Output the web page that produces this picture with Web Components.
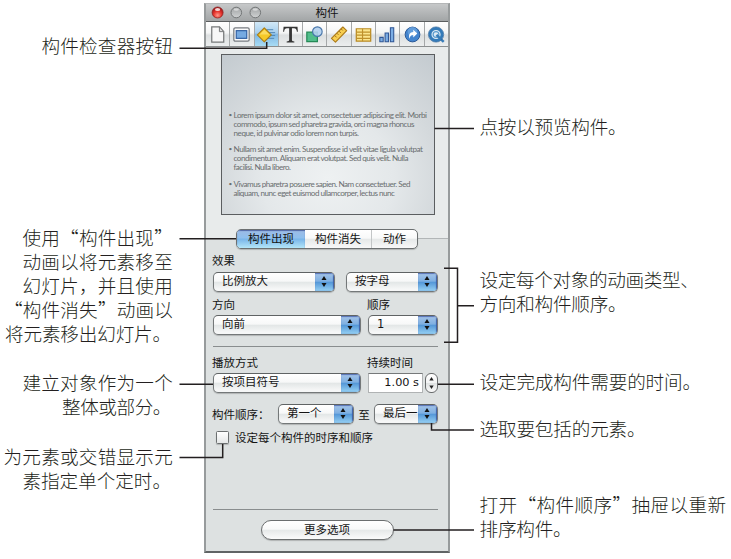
<!DOCTYPE html>
<html lang="zh-CN">
<head>
<meta charset="utf-8">
<title>构件</title>
<style>
html,body{margin:0;padding:0;background:#fff}
body{width:731px;height:559px;overflow:hidden;font-family:"Liberation Sans","Noto Sans CJK SC",sans-serif;color:#111}
</style>
</head>
<body>
<inspector-guide></inspector-guide>
<script>
function define(name, html, setup){
  const t=document.createElement('template');
  t.innerHTML=html;
  customElements.define(name, class extends HTMLElement{
    connectedCallback(){
      if(this.shadowRoot) return;
      this.attachShadow({mode:'open'}).appendChild(t.content.cloneNode(true));
      if(setup) setup(this,this.shadowRoot);
    }
  });
}

/* One unbroken line of text, tracked to the width in its w attribute. */
define('text-line',`<style>
:host{display:block;white-space:nowrap}
span{display:inline-block}
</style><span><slot></slot></span>`,(el,r)=>{
  const w=parseFloat(el.getAttribute('w'));
  const s=r.querySelector('span');
  const n=[...el.textContent].length;
  if(w&&n>1){
    const now=s.getBoundingClientRect().width;
    const ls=(w-now)/n;
    s.style.letterSpacing=ls.toFixed(3)+'px';
  }
});

define('call-out',`<style>
:host{display:block;font:300 18.6px/24px "Noto Sans CJK SC",sans-serif;color:#231f20;height:24px}
</style><slot></slot>`,(el)=>{el.style.marginTop=(el.getAttribute('gap')||0)+'px'});

define('pop-up',`<style>
:host{display:flex;box-sizing:border-box;height:20px;border:1.5px solid #747879;border-top-color:#5f6364;border-radius:5px;background:linear-gradient(#fff,#f7f8f8 45%,#e3e7e7 52%,#f6f7f7 90%);overflow:hidden;box-shadow:0 1px 1px #0003;font:11.5px/17px "DejaVu Sans","Noto Sans CJK SC",sans-serif}
.t{flex:1;padding-left:8px;overflow:hidden;white-space:nowrap}
.a{flex:none;width:19px;background:linear-gradient(#a5c4e8,#7fb0e2 45%,#5598d8 52%,#95d0f3);box-shadow:inset -1px 0 1px #3f5fa6,inset 0 1px 1px #5b76b8}
svg{display:block}
</style><div class="t"><slot></slot></div><div class="a"><svg width="18" height="17" viewBox="0 0 18 17"><path d="M6.5 7L9 3l2.5 4zM6.5 10h5L9 14z" fill="#111"/></svg></div>`,
(el)=>{el.style.width=el.getAttribute('w')+'px'});

define('tab-strip',`<style>
:host{display:flex;box-sizing:border-box;width:182px;height:20px;border:1.5px solid #6c7071;border-radius:5px;overflow:hidden;box-shadow:0 1px 1px #0003;font:11.5px/17px "Noto Sans CJK SC",sans-serif;text-align:center;background:linear-gradient(#fff,#f8f9f9 45%,#e6e9e9 52%,#f8f8f8)}
div{box-sizing:border-box}
.a{width:68px;background:linear-gradient(#9dbbe5,#8fc0ee 45%,#78b4e9 50%,#b4e6f8);box-shadow:inset 0 1px 1px #5067a4}
.b{width:67px;border-right:1px solid #c3c6c7}.c{flex:1}
</style><div class="a"><slot name="a"></slot></div><div class="b"><slot name="b"></slot></div><div class="c"><slot name="c"></slot></div>`);

define('title-bar',`<style>
:host{display:grid;grid-template-columns:1fr auto 1fr;height:18px;background:linear-gradient(#c6c8c9,#a2a5a6);border-bottom:1px solid #5b5e5f;align-items:center;font:11.5px/17px "Noto Sans CJK SC",sans-serif;box-sizing:border-box}
svg{display:block}
</style><svg width="64" height="17" viewBox="1 0 64 17">
<defs><radialGradient id="r" cx=".5" cy=".75" r=".7"><stop offset="0" stop-color="#ff9a8c"/><stop offset=".5" stop-color="#e8362f"/><stop offset="1" stop-color="#9d1216"/></radialGradient>
<linearGradient id="g" x2="0" y2="1"><stop offset="0" stop-color="#9fa2a3"/><stop offset="1" stop-color="#d0d2d3"/></linearGradient></defs>
<circle cx="12.6" cy="8.500" r="5.5" fill="url(#r)" stroke="#8d2322" stroke-width=".8"/><ellipse cx="12.6" cy="5.500" rx="2.6" ry="1.5" fill="#fff" opacity=".8"/>
<g fill="url(#g)" stroke="#737677"><circle cx="31.3" cy="8.500" r="5.3"/><circle cx="50.3" cy="8.500" r="5.3"/></g>
<g fill="#fff" opacity=".5"><ellipse cx="31.3" cy="5.500" rx="2.6" ry="1.3"/><ellipse cx="50.3" cy="5.500" rx="2.6" ry="1.3"/></g></svg><slot></slot>`);

define('tool-bar',`<style>
:host{display:flex;height:25px;box-sizing:border-box;border-bottom:1px solid #8b8f90;background:linear-gradient(#fff,#f4f5f5 45%,#dcdfe0 55%,#eceeee)}
div{flex:1 1 0;min-width:0;box-sizing:border-box;border-right:1px solid #a5a8a9;display:flex;align-items:center;justify-content:center}
div:last-child{border:0}
.on{background:linear-gradient(#d2e9f7,#a7cfee 45%,#7fb7e4 52%,#a8dcf4)}
svg{display:block;width:23px;height:23px;flex:none}
</style>
<div><svg viewBox="0 0 24 24"><path d="M6 4h8l4.500 5v11H6z" fill="#f7f7f7" stroke="#77797a" stroke-width="1.300"/><path d="M14 4v5h4.500z" fill="#ddd" stroke="#77797a"/></svg></div>
<div><svg viewBox="0 0 24 24"><rect x="4" y="5" width="16" height="14" rx="1.500" fill="#fbfbfb" stroke="#777b80" stroke-width="1.300"/><rect x="6.500" y="8" width="11" height="8" fill="#76aae2" stroke="#2d5ca0" stroke-width="1.200"/></svg></div>
<div class="on"><svg viewBox="0 0 24 24"><path d="M12 7h7M13 10h8M14 13h7M13 16h7" stroke="#4f86b4"/><path d="M9.700 5.200L17 12.400l-7.300 7.200-7.200-7.200z" fill="#f6c928" stroke="#ad7e14" stroke-width="1.200" stroke-linejoin="round"/><path d="M9.700 7L15 12H5z" fill="#ffe477" opacity=".7"/></svg></div>
<div><svg viewBox="0 0 24 24"><path d="M4.800 4h14.500l.4 5h-1c-.4-2.700-1.200-3.600-3-3.600h-2.200v12.200c0 1.400.5 1.700 2.500 1.800v1H8v-1c2-.1 2.600-.4 2.600-1.800V5.400H8.300c-1.800 0-2.600.9-3 3.600h-1z" fill="#353535"/></svg></div>
<div><svg viewBox="0 0 24 24"><path d="M4 9.500h11v10H4z" fill="#51bd8b" stroke="#258a57" stroke-width="1.300"/><circle cx="15" cy="9" r="5" fill="#b2d0ee" fill-opacity=".9" stroke="#4876aa" stroke-width="1.200"/></svg></div>
<div><svg viewBox="0 0 24 24"><path d="M3.600 16L15.500 4.200l4 3.800L7.800 20z" fill="#f8cf51" stroke="#ad7b1a" stroke-width="1.200" stroke-linejoin="round"/><path d="M7 13l2 2M9.300 10.700l1.600 1.600M11.500 8.500l2 2M13.800 6.200l1.600 1.600" stroke="#99691a"/></svg></div>
<div><svg viewBox="0 0 24 24"><path d="M4.500 6h15v13h-15z" fill="#fbe58d" stroke="#b98b24" stroke-width="1.300"/><path d="M4.500 9.500h15M4.500 12.700h15M4.500 16h15M11 6v13" stroke="#bf912b" stroke-width="1.200"/></svg></div>
<div><svg viewBox="0 0 24 24"><g fill="#7caee5" stroke="#2f5695" stroke-width="1.100"><path d="M4 15h3.500v4.500H4zM9.500 10.500H13v9H9.500zM15 5h3.500v14.500H15z"/></g></svg></div>
<div><svg viewBox="0 0 24 24"><circle cx="12" cy="12" r="7.700" fill="#4384ce" stroke="#285692"/><circle cx="12" cy="9" r="5" fill="#78aee5" opacity=".6"/><path d="M9.200 16.500c-2-3.500 0-7 3.600-7V7l4.200 4-4.200 4v-2.500c-2.400-.2-3.600 1.400-3.600 4z" fill="#fff"/></svg></div>
<div><svg viewBox="0 0 24 24"><circle cx="11.500" cy="12" r="6.300" fill="#deebf4" stroke="#347bb9" stroke-width="3"/><circle cx="11.500" cy="12" r="3" fill="none" stroke="#5b9cce" stroke-width="1.300"/><path d="M12 12.500l7.500 7.300" stroke="#377cb8" stroke-width="2.600"/><circle cx="11.500" cy="12" r="8" fill="none" stroke="#2a5f94" stroke-width=".6"/></svg></div>`);

define('slide-preview',`<style>
:host{display:block;box-sizing:border-box;width:214px;height:161px;border:1.5px solid #5b5e60;background:radial-gradient(ellipse 62% 80% at 50% 78%,#eef1f2 0,#e4e8ea 50%,#d4d9dc 85%,#c4cbd0 125%);padding:56px 0 0 6.500px;font:400 8.100px/8.800px Lato,sans-serif;color:#6a6e70}
p{margin:0 0 8px;display:grid;grid-template-columns:5px 1fr}
i{font-style:normal;font-size:6.500px}
</style>
<p><i>•</i><span><text-line w="193">Lorem ipsum dolor sit amet, consectetuer adipiscing elit. Morbi</text-line><text-line w="180.500">commodo, ipsum sed pharetra gravida, orci magna rhoncus</text-line><text-line w="125">neque, id pulvinar odio lorem non turpis.</text-line></span></p>
<p><i>•</i><span><text-line w="189">Nullam sit amet enim. Suspendisse id velit vitae ligula volutpat</text-line><text-line w="174.500">condimentum. Aliquam erat volutpat. Sed quis velit. Nulla</text-line><text-line w="57">facilisi. Nulla libero.</text-line></span></p>
<p><i>•</i><span><text-line w="176.500">Vivamus pharetra posuere sapien. Nam consectetuer. Sed</text-line><text-line w="161">aliquam, nunc eget euismod ullamcorper, lectus nunc</text-line></span></p>`);

define('num-field',`<style>
:host{display:flex;gap:2px}
.f{box-sizing:border-box;width:55px;height:20px;background:#fff;border:1px solid #b0b3b4;border-top:1.500px solid #76797a;font:11.300px/18px "DejaVu Sans",sans-serif;text-align:right;padding-right:3px}
.s{box-sizing:border-box;width:13px;height:20px;border:1.200px solid #686b6c;border-radius:6px;background:linear-gradient(#fff,#f3f4f4 48%,#dfe2e2 52%,#fafafa)}
svg{display:block}
</style><div class="f"><slot></slot></div><div class="s"><svg width="11" height="18" viewBox="0 0 11 18"><path d="M3.300 6.500L5.500 3l2.200 3.500zM3.300 11.500h4.400L5.500 15z" fill="#222"/></svg></div>`);

define('push-button',`<style>
:host{display:block;box-sizing:border-box;width:133px;height:20px;border:1.500px solid #6b6e6f;border-radius:10px;background:linear-gradient(#fff,#f8f9f9 45%,#e6e9e9 52%,#fbfbfb);box-shadow:0 1px 1px #0003;text-align:center;font:11.500px/17px "Noto Sans CJK SC",sans-serif}
</style><slot></slot>`);

define('inspector-window',`<style>
:host{display:flex;flex-direction:column;box-sizing:border-box;width:246px;height:550px;border:2px solid #979b9c;border-bottom-color:#606465;border-top:1px solid #b4b6b7;background:#dde1e1;font:11.500px/16px "Noto Sans CJK SC",sans-serif;color:#141414}
.top{background:#e8ebeb;height:192px;display:flex;flex-direction:column;align-items:center;box-sizing:border-box;padding:7px 0 0 2px;flex:none;border-bottom:1.500px solid #b2b6b7}
.tabs{display:flex;justify-content:center;margin:-10px 0 0;flex:none}
.body{padding:3px 10px 0 7px;display:flex;flex-direction:column}
.row{display:flex;align-items:center;flex:none}
.lab{height:16px;margin-left:-1px}
.lab>:nth-child(1){width:155px}
hr{border:0;height:1px;background:#898d8e;margin:0;width:225px;flex:none}
.ck{box-sizing:border-box;width:13px;height:13px;border:1px solid #6c7071;background:linear-gradient(#fff,#e4e7e7);border-radius:1.500px;box-shadow:0 1px 1px #0003;margin:0 6px 0 3px}
</style>
<title-bar>构件</title-bar>
<tool-bar></tool-bar>
<div class="top"><slide-preview></slide-preview></div>
<div class="tabs"><tab-strip><span slot="a">构件出现</span><span slot="b">构件消失</span><span slot="c">动作</span></tab-strip></div>
<div class="body">
<div class="row lab"><span>效果</span></div>
<div class="row" style="margin-top:4px;gap:11px"><pop-up w="122">比例放大</pop-up><pop-up w="92">按字母</pop-up></div>
<div class="row lab" style="margin-top:4px"><span>方向</span><span>顺序</span></div>
<div class="row" style="margin-top:3px;gap:7px"><pop-up w="148">向前</pop-up><pop-up w="70">1</pop-up></div>
<hr style="margin-top:11px">
<div class="row lab" style="margin-top:7px"><span>播放方式</span><span>持续时间</span></div>
<div class="row" style="margin-top:3px;gap:7px"><pop-up w="148">按项目符号</pop-up><num-field>1.00 s</num-field></div>
<div class="row" style="margin-top:11px"><span style="width:66px;margin-left:-1px;white-space:nowrap">构件顺序：</span><pop-up w="76">第一个</pop-up><span style="width:20px;text-align:center">至</span><pop-up w="64">最后一</pop-up></div>
<div class="row" style="margin-top:5px"><div class="ck"></div><span>设定每个构件的时序和顺序</span></div>
<hr style="margin-top:64px">
<div class="row" style="justify-content:center;margin-top:10px;padding-left:3px"><push-button>更多选项</push-button></div>
</div>`);

/* Leader lines lie over the window and join its controls to the notes. */
define('leader-lines',`<style>
:host{position:absolute;inset:0;pointer-events:none}
svg{display:block}
</style><svg width="731" height="559" viewBox="0 0 731 559" fill="none" stroke="#231f20" stroke-width="1.500">
<path d="M179.500 48.200H266.700V42M434.500 128.500H474M179.500 238.700H236M444 268.300H457.500V342.300H444M457.500 305.800H474M179.500 384.200H213M438 384.200H474M431.500 423V430H474M222.700 444V457.600H179.500M393.500 530H474"/></svg>`);

define('inspector-guide',`<style>
:host{display:grid;position:relative;grid-template-columns:173px 246px 1fr;column-gap:31px;width:731px;height:559px}
.l{display:flex;flex-direction:column;align-items:flex-end}
.r{display:flex;flex-direction:column;margin-left:-1.500px}
inspector-window{margin-top:3px}
</style>
<div class="l">
<call-out gap="33"><text-line w="131.500">构件检查器按钮</text-line></call-out>
<call-out gap="168"><text-line w="150.500">使用“构件出现”</text-line></call-out>
<call-out><text-line w="150.500">动画以将元素移至</text-line></call-out>
<call-out><text-line w="150.500">幻灯片，并且使用</text-line></call-out>
<call-out><text-line w="169">“构件消失”动画以</text-line></call-out>
<call-out style="margin-right:2px"><text-line w="166">将元素移出幻灯片。</text-line></call-out>
<call-out gap="25"><text-line w="150.500">建立对象作为一个</text-line></call-out>
<call-out style="margin-right:2px"><text-line w="109">整体或部分。</text-line></call-out>
<call-out gap="26"><text-line w="169.500">为元素或交错显示元</text-line></call-out>
<call-out style="margin-right:2px"><text-line w="148.500">素指定单个定时。</text-line></call-out>
</div>
<inspector-window></inspector-window>
<div class="r">
<call-out gap="114"><text-line w="147">点按以预览构件。</text-line></call-out>
<call-out gap="129"><text-line w="219">设定每个对象的动画类型、</text-line></call-out>
<call-out><text-line w="147">方向和构件顺序。</text-line></call-out>
<call-out gap="54"><text-line w="221.500">设定完成构件需要的时间。</text-line></call-out>
<call-out gap="23"><text-line w="166">选取要包括的元素。</text-line></call-out>
<call-out gap="52"><text-line w="247">打开“构件顺序”抽屉以重新</text-line></call-out>
<call-out><text-line w="92">排序构件。</text-line></call-out>
</div>
<leader-lines></leader-lines>`);
</script>
</body>
</html>
